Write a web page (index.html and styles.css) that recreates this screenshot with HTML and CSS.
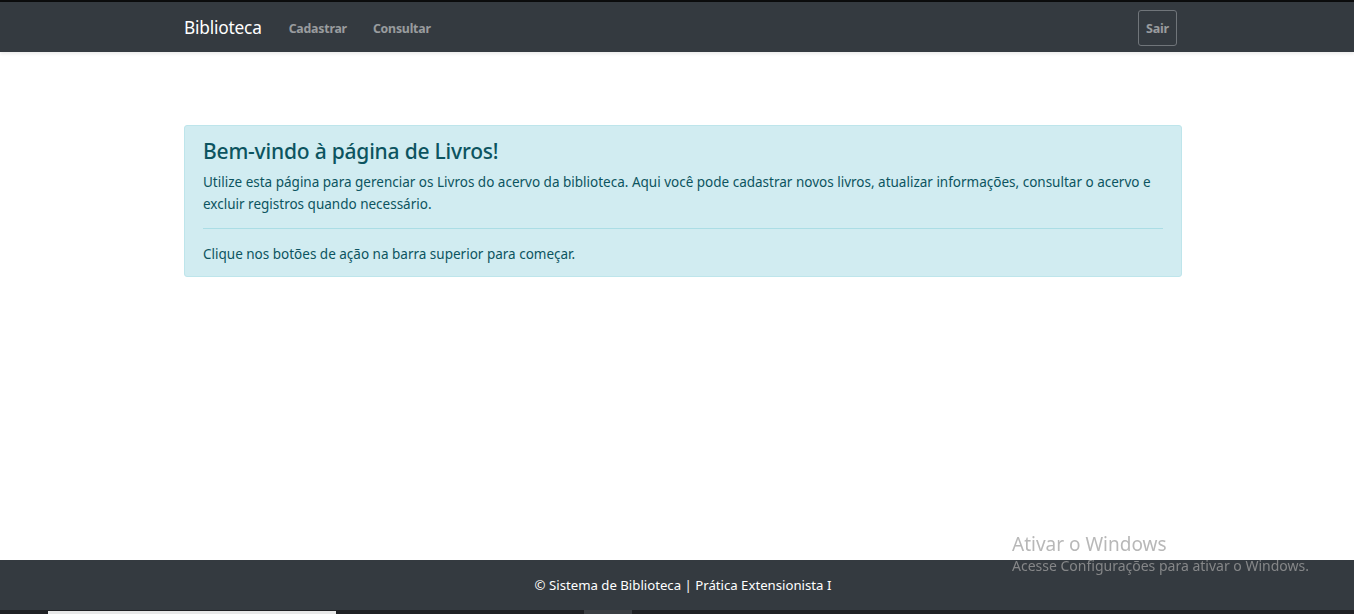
FILE: index.html
```html
<!DOCTYPE html>
<html lang="pt-br">
<head>
<meta charset="utf-8">
<title>Biblioteca</title>
<link rel="stylesheet" href="styles.css">
</head>
<body>
<div class="topline"></div>
<nav class="navbar">
  <div class="container nav-inner">
    <a class="brand" href="#">Biblioteca</a>
    <ul class="nav-links">
      <li><a href="#">Cadastrar</a></li>
      <li><a href="#">Consultar</a></li>
    </ul>
    <button class="btn-sair">Sair</button>
  </div>
</nav>
<main class="main">
  <div class="container">
    <div class="alert">
      <h4 class="alert-heading">Bem-vindo à página de Livros!</h4>
      <p>Utilize esta página para gerenciar os Livros do acervo da biblioteca. Aqui você pode cadastrar novos livros, atualizar informações, consultar o acervo e excluir registros quando necessário.</p>
      <hr>
      <p class="last">Clique nos botões de ação na barra superior para começar.</p>
    </div>
  </div>
</main>
<footer class="footer">© Sistema de Biblioteca | Prática Extensionista I</footer>
<div class="taskbar"><span class="tb-win"></span><span class="tb-item"></span></div>
<div class="watermark">
  <div class="wm-title">Ativar o Windows</div>
  <div class="wm-sub">Acesse Configurações para ativar o Windows.</div>
</div>
</body>
</html>
```
FILE: styles.css
```css
* { box-sizing: border-box; }
html, body { margin: 0; height: 100%; }
body {
  font-family: "Noto Sans", "Open Sans", "DejaVu Sans", sans-serif;
  font-size: 14px;
  color: #212529;
  background: #fff;
  display: flex;
  flex-direction: column;
  height: 614px;
  overflow: hidden;
}
.topline { height: 2px; background: #0b0c0d; flex: none; }
.navbar {
  height: 50px;
  background: #343a40;
  flex: none;
  box-shadow: 0 2px 3px rgba(0,0,0,0.08);
  position: relative;
  z-index: 1;
}
.container { width: 998px; margin-left: calc(50% - 493px); }
.nav-inner { display: flex; align-items: center; height: 100%; }
.brand {
  color: #fff;
  text-decoration: none;
  font-size: 17.3px;
  margin-right: 27px;
  letter-spacing: -0.2px;
}
.nav-links { list-style: none; margin: 0; padding: 0; display: flex; gap: 26px; flex: 1; }
.nav-links a {
  color: rgba(255,255,255,0.5);
  text-decoration: none;
  font-weight: bold;
  font-size: 12.3px;
  letter-spacing: -0.2px;
}
.btn-sair {
  background: transparent;
  border: 1px solid #70757a;
  border-radius: 3px;
  color: rgba(255,255,255,0.5);
  font-family: inherit;
  font-weight: bold;
  font-size: 12.5px;
  width: 39px;
  height: 36px;
  padding: 0;
  margin-right: 5px;
  margin-top: 2px;
  letter-spacing: -0.2px;
}
.main { flex: 1; padding-top: 73px; }
.alert {
  background: #d1ecf1;
  border: 1px solid #bee5eb;
  border-radius: 3px;
  color: #0c5460;
  padding: 11px 18px 12px;
}
.alert-heading {
  margin: 0 0 6px;
  font-size: 21px;
  font-weight: 500;
  letter-spacing: -0.2px;
}
.alert p { margin: 0; line-height: 22px; font-size: 13.5px; }
.alert hr { border: 0; border-top: 1px solid #abdde5; margin: 13px 0 14px; }
.alert .last { margin-bottom: -1px; }
.footer {
  height: 50px;
  flex: none;
  background: #343a40;
  color: #fff;
  display: flex;
  align-items: center;
  justify-content: center;
  font-size: 13.2px;
  padding-left: 12px;
}
.taskbar { height: 4px; background: #202124; flex: none; position: relative; }
.tb-win { position: absolute; left: 48px; top: 1px; width: 288px; height: 3px; background: #e8e8e8; }
.tb-item { position: absolute; left: 584px; top: 0; width: 48px; height: 4px; background: #3c3f43; }
.watermark {
  position: fixed;
  left: 1012px;
  top: 532px;
  color: rgba(160,160,160,0.75);
  pointer-events: none;
}
.wm-title { font-size: 19px; line-height: 24px; }
.wm-sub { font-size: 14px; line-height: 20px; }
```
